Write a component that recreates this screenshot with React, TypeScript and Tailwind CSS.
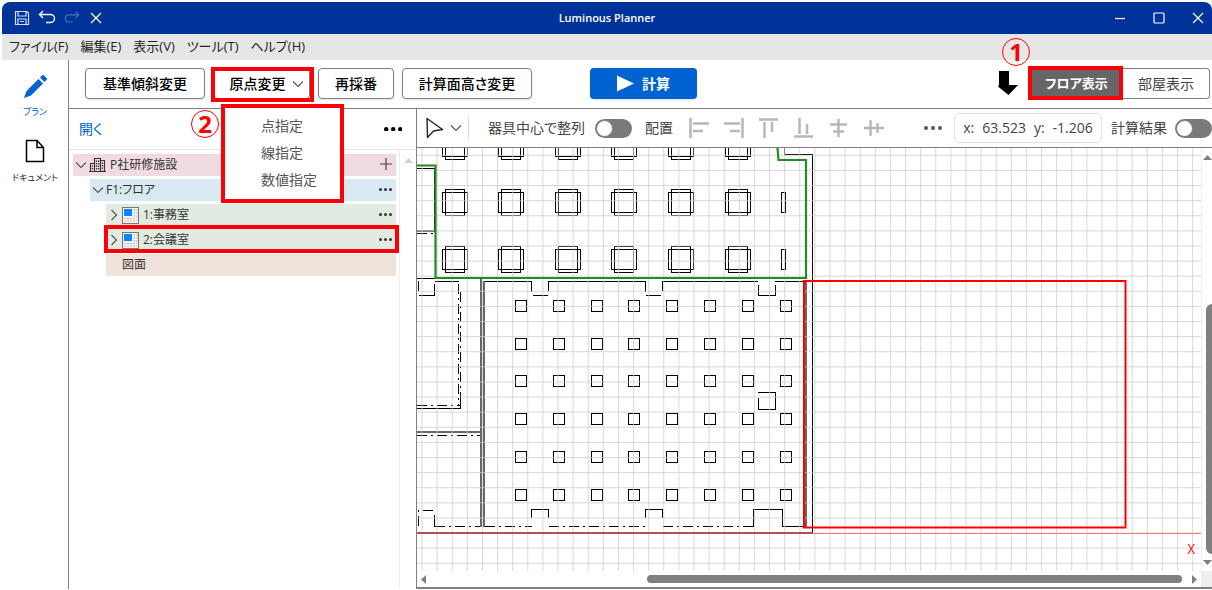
import type { ReactNode } from 'react';
import clsx from 'clsx';

const MENUS = ['ファイル(F)', '編集(E)', '表示(V)', 'ツール(T)', 'ヘルプ(H)'];
const ORIGIN_OPTIONS = ['点指定', '線指定', '数値指定'];

const GRID = 15.11;
const range = (n: number) => Array.from({ length: n }, (_, i) => i);

const Dots = ({ className, r = 2, gap = 7 }: { className?: string; r?: number; gap?: number }) => (
  <svg width={gap * 2 + r * 2} height={r * 2} className={className} fill="currentColor">
    {range(3).map((i) => (
      <circle key={i} cx={r + i * gap} cy={r} r={r} />
    ))}
  </svg>
);

const Chevron = ({ open = true, className }: { open?: boolean; className?: string }) => (
  <svg
    width="12"
    height="12"
    viewBox="0 0 12 12"
    fill="none"
    stroke="#555"
    strokeWidth="1.1"
    className={clsx('shrink-0', className)}
  >
    <path d={open ? 'M1 3.5 6 8.5 11 3.5' : 'M3.5 1 8.5 6 3.5 11'} />
  </svg>
);

// Red frame laid over a control
const Frame = ({ className }: { className: string }) => (
  <span className={clsx('absolute border-4 border-[#fb0007] pointer-events-none', className)} />
);

const StepMark = ({ n, className }: { n: number; className: string }) => (
  <span
    className={clsx(
      "absolute z-20 size-7 rounded-full border border-[#fb0007] text-[#fb0007] text-2xl leading-none font-bold font-['Noto_Sans'] flex items-center justify-center",
      className,
    )}
  >
    {n}
  </span>
);

const TitleBar = () => (
  <header className="relative h-8 shrink-0 bg-[#003399] rounded-t-lg text-white flex items-center justify-between">
    <div className="flex items-center gap-2 pl-3">
      <button aria-label="Save" className="size-4">
        <svg viewBox="0 0 16 16" fill="none" stroke="#d5def2" strokeWidth="1.2">
          <path d="M1.5 1.5h11.5l1.5 1.5v11.5h-13z M4 1.5v4.5h8v-4.5 M4 14.5v-5.5h8v5.5 M6 11.5h4" />
        </svg>
      </button>
      <button aria-label="Undo" className="size-[18px]">
        <svg viewBox="0 0 18 18" fill="none" stroke="white" strokeWidth="1.4">
          <path d="M5 2 1.5 5.5 5 9 M1.5 5.5h11a3.8 3.8 0 0 1 0 8h-4.5" />
        </svg>
      </button>
      <button aria-label="Redo" className="size-4" disabled>
        <svg viewBox="0 0 18 18" fill="none" stroke="#4a6db8" strokeWidth="1.4">
          <path d="M13 2l3.5 3.5L13 9 M16.5 5.5h-11a3.8 3.8 0 0 0 0 8h4.5" />
        </svg>
      </button>
      <button aria-label="Cancel" className="size-4">
        <svg viewBox="0 0 16 16" fill="none" stroke="white" strokeWidth="1.3">
          <path d="M3 3l10 10M13 3 3 13" />
        </svg>
      </button>
    </div>
    <h1 className="absolute inset-x-0 text-center text-[11px] font-semibold pointer-events-none">
      Luminous Planner
    </h1>
    <div className="flex items-center gap-[27px] pr-2">
      <button aria-label="Minimize" className="size-3">
        <svg viewBox="0 0 12 12" stroke="white" strokeWidth="1.2">
          <path d="M1 6.5h10" />
        </svg>
      </button>
      <button aria-label="Maximize" className="size-3">
        <svg viewBox="0 0 12 12" fill="none" stroke="white" strokeWidth="1.2">
          <rect x="1" y="1" width="10" height="10" rx="1" />
        </svg>
      </button>
      <button aria-label="Close" className="size-3">
        <svg viewBox="0 0 12 12" stroke="white" strokeWidth="1.2">
          <path d="M1 1l10 10M11 1L1 11" />
        </svg>
      </button>
    </div>
  </header>
);

const SideNav = () => (
  <nav className="w-[67px] shrink-0 border-r border-[#808080] flex flex-col items-center text-[9px] leading-3">
    <a href="#plan" className="mt-3.5 flex flex-col items-center gap-1.5 text-[#0063d1]">
      <svg width="26" height="26" viewBox="0 0 26 26" fill="currentColor">
        <path d="M2 24l2.5-7L16.5 5l4.5 4.5L9 21.5z M18 3.5l2-2c.6-.6 1.4-.6 2 0l2.500 2.500c.6.6.6 1.4 0 2l-2 2z" />
      </svg>
      プラン
    </a>
    <a href="#document" className="mt-5 flex flex-col items-center gap-2 text-[#333]">
      <svg width="20" height="26" viewBox="0 0 20 26" fill="none" stroke="black" strokeWidth="1.5">
        <path d="M1.5 2.5h10.5l6.5 7v14h-17z M12 2.5v7h6.5" />
      </svg>
      ドキュメント
    </a>
  </nav>
);

const ToolButton = ({ children, className }: { children: ReactNode; className: string }) => (
  <button
    className={clsx(
      'relative h-[31px] rounded border border-[#808080] bg-white text-sm font-medium text-black shadow-sm flex items-center justify-center',
      className,
    )}
  >
    {children}
  </button>
);

const OriginMenu = () => (
  <div className="relative">
    <ToolButton className="w-[97px] gap-1.5 pl-2.5">
      原点変更
      <Chevron />
    </ToolButton>
    <Frame className="-left-0.5 -right-1 -top-px -bottom-[3px]" />
    <StepMark n={2} className="top-[42px] -left-[22px]" />
    <ul className="absolute z-10 left-2 top-9 w-[123px] h-[99px] border-4 border-[#fb0007] bg-white pt-1 pl-9 text-sm text-[#555]">
      {ORIGIN_OPTIONS.map((label) => (
        <li key={label}>
          <button className="block leading-[27px]">{label}</button>
        </li>
      ))}
    </ul>
  </div>
);

const Toolbar = () => (
  <div className="relative h-[49px] shrink-0 border-b border-[#808080] flex items-start gap-2 pt-2 pl-4 pr-0.5">
    <ToolButton className="w-[120px]">基準傾斜変更</ToolButton>
    <OriginMenu />
    <ToolButton className="w-[76px]">再採番</ToolButton>
    <ToolButton className="w-[130px]">計算面高さ変更</ToolButton>
    <button className="ml-[50px] h-[31px] w-[107px] rounded bg-[#0063d1] text-white text-sm font-bold shadow-sm flex items-center justify-center gap-2">
      <svg width="17" height="17" viewBox="0 0 17 17" fill="white">
        <path d="M0 0.5 17 8.5 0 16.5z" />
      </svg>
      計算
    </button>
    <svg width="20" height="25" viewBox="0 0 20 25" className="ml-auto mt-[3px] mr-1.5">
      <path d="M1 0h10v14h9L10.5 24 0 15.5 1 14z" />
    </svg>
    <div className="relative flex">
      <button className="relative h-[31px] w-[91px] bg-[#666] text-white text-[13px] font-bold pr-0.5">
        フロア表示
        <Frame className="-left-1 right-0 -top-0.5 -bottom-px" />
      </button>
      <button className="h-[31px] w-[87px] rounded-r border border-l-0 border-[#808080] text-sm text-[#444]">
        部屋表示
      </button>
      <StepMark n={1} className="-top-[30px] -left-[30px]" />
    </div>
  </div>
);

const BuildingIcon = () => (
  <svg width="17" height="16" viewBox="0 0 17 16" fill="none" stroke="#333" strokeWidth="1.1" className="shrink-0">
    <path d="M5.5 14.5v-13h6v13 M11.5 3.5h4v11 M5.5 6.5h-4v8 M0 14.5h17" />
    <path d="M7.5 3.5v10 M9.7 3.5v10 M13.5 5.5v8 M3.5 8.5v5" strokeWidth="1.3" strokeDasharray="1.5 1" />
  </svg>
);

const RoomIcon = () => (
  <svg width="17" height="17" viewBox="0 0 17 17" className="shrink-0">
    <rect x="0.5" y="0.5" width="16" height="16" fill="#f5f5f5" stroke="#777" />
    <rect x="2" y="2" width="8" height="7" fill="#0a84ff" />
    <path d="M12.5 2v8 M15 2v8 M2 11.5h13 M2 14h13" stroke="#bbb" strokeDasharray="2 1" />
  </svg>
);

const TreeRow = ({ children, className, action }: { children: ReactNode; className: string; action?: ReactNode }) => (
  <li className={clsx('relative h-[22px] flex items-center text-xs text-[#333]', className)}>
    {children}
    {action && (
      <button aria-label="Row actions" className="ml-auto mr-1 pb-0.5">
        {action}
      </button>
    )}
  </li>
);

const TreePanel = () => (
  <aside className="w-[348px] shrink-0 border-r border-[#808080] flex flex-col">
    <div className="h-[41px] shrink-0 border-b border-[#e5e5e5] flex items-center justify-between pl-2.5 pr-3.5">
      <a href="#open" className="text-sm text-[#0063d1]">開く</a>
      <button aria-label="Tree menu">
        <Dots r={2.2} />
      </button>
    </div>
    <div className="flex-1 flex">
      <ul className="flex-1 flex flex-col gap-[3px] pt-1 pl-1 pr-[3px]">
        <TreeRow
          className="bg-[#f0dbe3] pl-0.5"
          action={
            <svg width="12" height="12" viewBox="0 0 12 12" stroke="#444" strokeWidth="1.2">
              <path d="M6 0v12M0 6h12" />
            </svg>
          }
        >
          <Chevron className="mr-0.5" />
          <BuildingIcon />
          <span className="ml-1">P社研修施設</span>
        </TreeRow>
        <TreeRow className="ml-[17px] bg-[#d9e9f2] pl-0.5" action={<Dots r={1.5} gap={5} />}>
          <Chevron className="mr-0.5" />
          F1:フロア
        </TreeRow>
        <TreeRow className="ml-[33px] bg-[#e1ebe1] pl-0.5" action={<Dots r={1.5} gap={5} />}>
          <Chevron open={false} className="mr-0.5" />
          <RoomIcon />
          <span className="ml-1">1:事務室</span>
        </TreeRow>
        <TreeRow className="ml-[33px] bg-[#e1ebe1] pl-0.5" action={<Dots r={1.5} gap={5} />}>
          <Chevron open={false} className="mr-0.5" />
          <RoomIcon />
          <span className="ml-1">2:会議室</span>
          <Frame className="-left-0.5 -right-[3px] -top-1 -bottom-0.5" />
        </TreeRow>
        <TreeRow className="ml-[33px] bg-[#f0e3d9] pl-4">図面</TreeRow>
      </ul>
      <div className="w-[17px] border-l border-[#eee] flex flex-col items-center pt-2">
        <svg width="9" height="5" viewBox="0 0 9 5" fill="#d0d0d0">
          <path d="M4.5 0 9 5H0z" />
        </svg>
      </div>
    </div>
  </aside>
);

const ALIGN_ICONS = [
  ['左揃え', 'M1.5 0v20 M4 5.5h16 M4 13h10'],
  ['右揃え', 'M18.5 0v20 M0 5.5h16 M6 13h10'],
  ['上揃え', 'M0 1.5h19 M5.5 4v16 M13 4v10'],
  ['下揃え', 'M0 18.5h19 M5.5 0v16 M13 6v10'],
  ['左右中央揃え', 'M9.5 1v18 M1 6.5h17 M4 13.5h11'],
  ['上下中央揃え', 'M0 10h20 M6.5 2v16 M13.5 5v10'],
];

const Switch = ({ id, className }: { id: string; className: string }) => (
  <input
    id={id}
    type="checkbox"
    role="switch"
    className={clsx(
      "shrink-0 appearance-none w-[37px] h-[19px] rounded-full bg-[#7a7a7a] p-px before:content-[''] before:block before:size-[17px] before:rounded-full before:bg-white before:border before:border-[#7a7a7a]",
      className,
    )}
  />
);

const CanvasToolbar = () => (
  <div className="h-[39px] shrink-0 border-b border-[#808080] flex items-center pl-2 text-sm text-[#444] whitespace-nowrap overflow-hidden">
    <button aria-label="Select tool" className="flex items-center gap-1.5">
      <svg width="19" height="22" viewBox="0 0 19 22" fill="none" stroke="#222" strokeWidth="1.4" strokeLinejoin="round">
        <path d="M2 1.5 17.5 12.5 8.500 14 2.5 20.5z" />
      </svg>
      <Chevron />
    </button>
    <span className="w-px h-6 bg-[#ddd] ml-1.5 mr-[19px]" />
    <label htmlFor="center-align">器具中心で整列</label>
    <Switch id="center-align" className="ml-2.5 mr-[13px]" />
    <span>配置</span>
    <div className="flex items-center gap-[15px] ml-4">
      {ALIGN_ICONS.map(([label, d]) => (
        <button key={label} aria-label={label}>
          <svg width="20" height="20" viewBox="0 0 20 20" fill="none" stroke="#b8b8b8" strokeWidth="2.5">
            <path d={d} />
          </svg>
        </button>
      ))}
    </div>
    <button aria-label="More" className="ml-auto mr-3 text-[#555]">
      <Dots r={2} />
    </button>
    <output className="w-[148px] h-[30px] rounded-md border border-[#e2e2e2] flex items-center justify-center gap-2">
      <span>x:</span>
      <span>63.523</span>
      <span>y:</span>
      <span>-1.206</span>
    </output>
    <label htmlFor="calc-result" className="ml-[9px]">計算結果</label>
    <Switch id="calc-result" className="ml-2 mr-0" />
  </div>
);

const Grid = () => (
  <g stroke="#ccc" strokeOpacity="0.75">
    {range(120).map((i) => (
      <line key={`v${i}`} x1={422 + i * GRID} x2={422 + i * GRID} y1="0" y2="2000" />
    ))}
    {range(80).map((i) => (
      <line key={`h${i}`} x1="0" x2="3000" y1={155.3 + i * GRID} y2={155.3 + i * GRID} />
    ))}
  </g>
);

const FloorPlan = () => (
  <svg className="w-full h-full block" fill="none" role="img" aria-label="Floor plan">
    <g transform="translate(-417 -148)">
      <g stroke="#000" shapeRendering="crispEdges">
        {/* ceiling fixtures of the office */}
        {range(3).map((r) =>
          range(6).map((c) => (
            <g key={`${r}-${c}`} transform={`translate(${Math.round(441.5 + c * 56.6)} ${Math.round(132.5 + r * 56.7)})`}>
              <rect x="3.5" y="0.5" width="19" height="26" />
              <rect x="0.5" y="3.5" width="25" height="20" />
            </g>
          )),
        )}
        <rect x="781.5" y="192.5" width="4" height="20" rx="1" />
        <rect x="781.5" y="249.5" width="4" height="20" rx="1" />
        {/* fixtures of the meeting room */}
        {range(6).map((r) =>
          range(8).map((c) => (
            <rect
              key={`${r}-${c}`}
              x={Math.round(515 + c * 37.8) + 0.5}
              y={Math.round(300 + r * 37.7) + 0.5}
              width="11"
              height="11"
              rx="0.5"
            />
          )),
        )}
        {/* walls */}
        <path d="M784.5 148v6.5h28v379 M417 168.5h17v63 M417 278.5h19" />
        <path d="M418.5 281v10 M419 295.5h15.5v-12 M435 281.5h24" />
        <path d="M417 408.5h43.5v-8" />
        <path d="M484 281.5h47.5v10 M533 295.5h15 M548.5 291v-9.5h97v10 M646 295.5h15 M662.5 291v-9.5h95.5 M758.5 285v10.5h17v-10.5 M775 281.5h30" />
        <path d="M758 392.5h17.5v16.5h-17v-11" />
        <path d="M531.5 518v-8.5h17v8.5 M645.5 518v-8.5h17v8.5 M753.5 526.5v-17h29v17h23 M434.5 515v11.5" />
        <path
          strokeDasharray="10 4 2 4"
          d="M458.5 284v122 M460.5 292v110 M417 405.5h43 M417 435.5h64 M417 233.5h18 M418.5 526v-15.5h16 M434.5 526.5h47 M484.5 526.5h47 M549 526.5h96 M663 526.5h90"
        />
      </g>
      <path d="M481 278v249 M484 281v246 M417 432h64 M417 231h17 M806 281v246" stroke="#666" strokeWidth="2" />
      <Grid />
      <path d="M777.5 148l1 12h27.5v118H435.5v-112.5h-19" stroke="#228b22" strokeWidth="2.2" />
      <path d="M417 533.5h2583" stroke="#f77" />
      <path d="M417 533h396" stroke="#b05050" strokeWidth="2" />
      <rect x="804" y="281" width="321.5" height="246.5" stroke="#f00" strokeWidth="2" />
      <text x="1187" y="554" fill="#f03030" className="text-sm font-['Liberation_Mono']">X</text>
    </g>
  </svg>
);

const Arrow = ({ d }: { d: string }) => (
  <svg width="9" height="9" viewBox="0 0 9 9" fill="#808080" className="shrink-0">
    <path d={d} />
  </svg>
);

const CanvasPanel = () => (
  <main className="flex-1 min-w-0 flex flex-col">
    <CanvasToolbar />
    <div className="flex-1 min-h-0 flex">
      <div className="flex-1 min-w-0 overflow-hidden">
        <FloorPlan />
      </div>
      <div className="w-[11px] shrink-0 border-l border-[#eee] flex flex-col items-end pt-1.5 pb-1 overflow-hidden">
        <Arrow d="M4.5 1 9 6H0z" />
        <div className="flex-1 w-full flex flex-col justify-end items-end pb-1">
          <div className="w-1.5 h-[64%] rounded-l-full bg-[#808080]" />
        </div>
        <Arrow d="M4.5 7 9 2H0z" />
      </div>
    </div>
    <div className="h-[18px] shrink-0 border-b-2 border-[#808080] flex items-center pl-[3px]">
      <Arrow d="M1 4.5 6 0v9z" />
      <div className="flex-1 flex justify-end pr-2">
        <div className="h-2 w-[71%] rounded-full bg-[#808080]" />
      </div>
      <Arrow d="M7 4.5 2 0v9z" />
      <span className="ml-0.5 w-[11px] h-full bg-[#eee]" />
    </div>
  </main>
);

export default function App() {
  return (
    <div className="h-screen overflow-hidden bg-white pt-0.5 pl-0.5 pb-px flex flex-col font-['Open_Sans','Noto_Sans_CJK_JP',sans-serif] [font-feature-settings:'palt']">
      <TitleBar />
      <nav className="h-[26px] shrink-0 bg-[#e6e6e6] flex items-center gap-3 pl-[7px] text-[13px] text-[#222]">
        {MENUS.map((menu) => (
          <button key={menu}>{menu}</button>
        ))}
      </nav>
      <div className="flex-1 min-h-0 flex">
        <SideNav />
        <div className="flex-1 min-w-0 flex flex-col">
          <Toolbar />
          <div className="flex-1 min-h-0 flex">
            <TreePanel />
            <CanvasPanel />
          </div>
        </div>
      </div>
    </div>
  );
}
